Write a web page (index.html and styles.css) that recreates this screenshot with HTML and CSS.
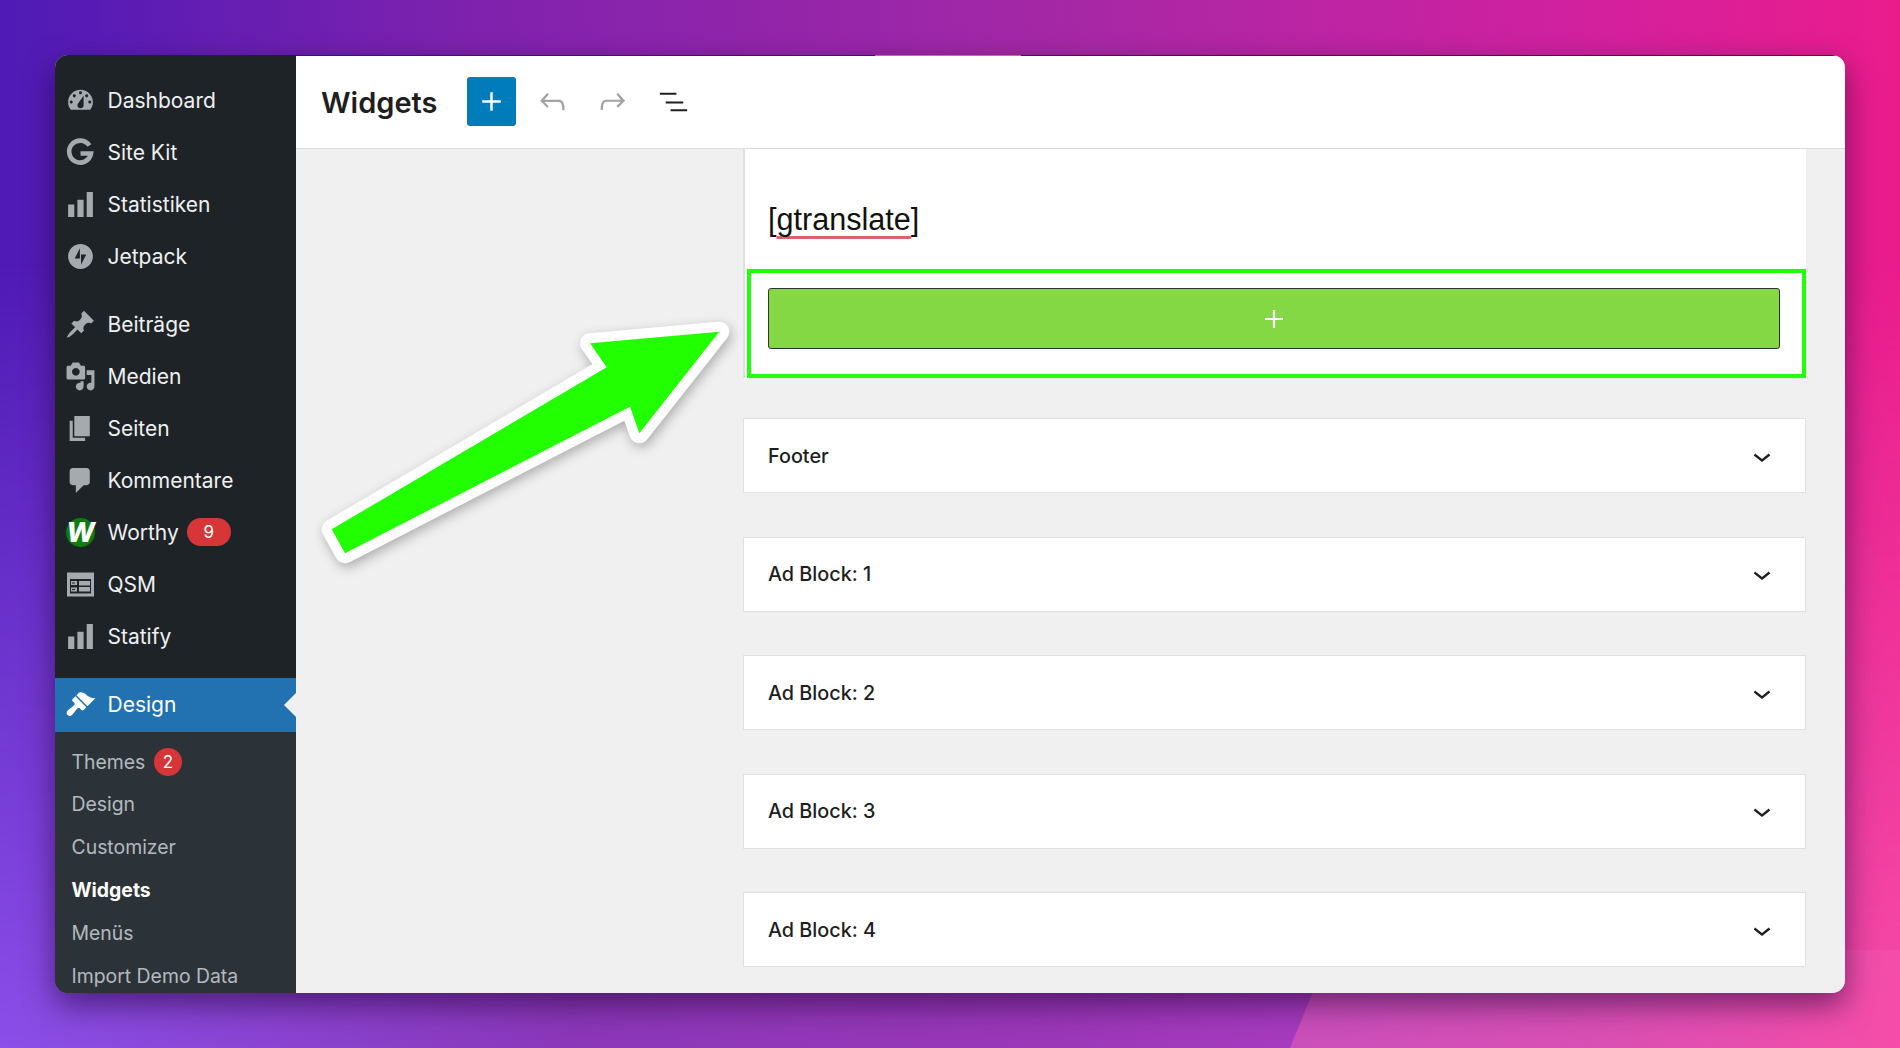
FILE: index.html
```html
<!DOCTYPE html>
<html lang="de">
<head>
<meta charset="utf-8">
<title>Widgets</title>
<link rel="stylesheet" href="styles.css">
</head>
<body>
<div class="wedge"></div>
<div class="window">
  <nav class="sidebar">
    <ul class="menu">
      <li class="item"><svg class="ico" viewBox="0 0 20 20"><path fill-rule="evenodd" d="M3.76 16h12.48c1.1-1.37 1.76-3.11 1.76-5 0-4.42-3.58-8-8-8s-8 3.58-8 8c0 1.89.66 3.63 1.76 5zM10 4c.55 0 1 .45 1 1s-.45 1-1 1-1-.45-1-1 .45-1 1-1zM6 6c.55 0 1 .45 1 1s-.45 1-1 1-1-.45-1-1 .45-1 1-1zm8 0c.55 0 1 .45 1 1s-.45 1-1 1-1-.45-1-1 .45-1 1-1zm-5.37 5.55L12 7v6c0 1.1-.9 2-2 2s-2-.9-2-2c0-.57.24-1.08.63-1.45zM4 10c.55 0 1 .45 1 1s-.45 1-1 1-1-.45-1-1 .45-1 1-1zm12 0c.55 0 1 .45 1 1s-.45 1-1 1-1-.45-1-1 .45-1 1-1z"/></svg>Dashboard</li>
      <li class="item"><svg class="ico" viewBox="0 0 31 31"><path class="gstroke" d="M24.400 8.600A11 11 0 1 0 26 16.500H15.500"/></svg>Site Kit</li>
      <li class="item"><svg class="ico" viewBox="0 0 20 20"><path d="M18 18V2h-4v16h4zm-6 0V7H8v11h4zm-6 0v-8H2v8h4z"/></svg>Statistiken</li>
      <li class="item"><svg class="ico" viewBox="-4 -4 40 40"><path fill-rule="evenodd" d="M16 0C7.200 0 0 7.200 0 16s7.200 16 16 16 16-7.200 16-16S24.800 0 16 0zM15.200 18.700H8.500L15.200 5.500v13.200zM16.700 26.500V13.300h6.700z"/></svg>Jetpack</li>
    </ul>
    <ul class="menu menu-next">
      <li class="item"><svg class="ico" viewBox="0 0 20 20"><path d="M10.440 3.020l1.820-1.820 6.360 6.350-1.830 1.820c-1.050-.68-2.480-.57-3.410.36l-.75.75c-.92.93-1.040 2.350-.35 3.410l-1.830 1.820-2.410-2.410-2.800 2.790c-.42.42-3.380 2.710-3.800 2.290s1.860-3.390 2.280-3.810l2.790-2.790L4.100 9.360l1.830-1.820c1.050.69 2.480.57 3.400-.36l.75-.75c.93-.92 1.050-2.350.36-3.410z"/></svg>Beiträge</li>
      <li class="item"><svg class="ico" viewBox="0 0 20 20"><path fill-rule="evenodd" d="M13 11V4c0-.55-.45-1-1-1h-1.670L9 1H5L3.670 3H2c-.55 0-1 .45-1 1v7c0 .55.45 1 1 1h10c.55 0 1-.45 1-1zM7 4.500c1.380 0 2.500 1.120 2.500 2.500S8.380 9.500 7 9.500 4.500 8.380 4.500 7 5.620 4.500 7 4.500zM14 6h5v10.500c0 1.380-1.120 2.500-2.500 2.500S14 17.880 14 16.500s1.120-2.500 2.500-2.500c.17 0 .34.020.5.050V9h-3V6zm-4 8.050V13h2v3.500c0 1.380-1.120 2.500-2.500 2.500S7 17.880 7 16.500 8.120 14 9.500 14c.17 0 .34.020.5.050z"/></svg>Medien</li>
      <li class="item"><svg class="ico" viewBox="0 0 20 20"><path d="M6 15V2h10v13H6zm-1 1h8v2H3V5h2v11z"/></svg>Seiten</li>
      <li class="item"><svg class="ico" viewBox="0 0 20 20"><path d="M5 2h9c1.100 0 2 .9 2 2v7c0 1.100-.9 2-2 2h-2l-5 5v-5H5c-1.100 0-2-.9-2-2V4c0-1.100.9-2 2-2z"/></svg>Kommentare</li>
      <li class="item"><span class="worthy-logo">W</span>Worthy<span class="badge badge-wide">9</span></li>
      <li class="item"><svg class="ico" viewBox="0 0 31 31"><path fill-rule="evenodd" d="M2 3.500h27v24H2zM5 10v14.500h21V10z"/><path d="M6 12h6v4H6zM6 18.500h6v4H6z M14 12h11v4.500H14zM14 18h11v4.500H14z"/><path class="qsm-cut" d="M7 14h3M7 20.500h3"/></svg>QSM</li>
      <li class="item"><svg class="ico" viewBox="0 0 20 20"><path d="M18 18V2h-4v16h4zm-6 0V7H8v11h4zm-6 0v-8H2v8h4z"/></svg>Statify</li>
    </ul>
    <div class="current"><svg class="ico ico-white" viewBox="0 0 20 20"><path d="M14.480 11.060L7.410 3.990l1.500-1.500c.5-.56 2.300-.47 3.510.32 1.210.8 1.430 1.280 2.910 2.100 1.180.64 2.450 1.260 4.450.85zm-.71.71L6.700 4.700 4.930 6.470c-.39.39-.39 1.020 0 1.410l1.060 1.060c.39.39.39 1.030 0 1.420-.6.6-1.430 1.270-2.210 1.840-.78.58-1.430 1.130-2.150 1.820-.78.78-.78 2.050 0 2.830.78.78 2.050.78 2.830 0 .69-.72 1.240-1.370 1.820-2.150.57-.78 1.240-1.610 1.840-2.210.39-.39 1.030-.39 1.420 0l1.060 1.060c.39.39 1.020.39 1.410 0z"/></svg>Design</div>
    <ul class="submenu">
      <li class="subitem">Themes<span class="badge">2</span></li>
      <li class="subitem">Design</li>
      <li class="subitem">Customizer</li>
      <li class="subitem subitem-active">Widgets</li>
      <li class="subitem">Menüs</li>
      <li class="subitem">Import Demo Data</li>
    </ul>
  </nav>
  <main class="main">
    <header class="topbar">
      <span class="topstrip"></span>
      <h1 class="title">Widgets</h1>
      <button class="btn btn-add"><svg viewBox="0 0 24 24"><path d="M18 11.200h-5.200V6h-1.600v5.200H6v1.600h5.200V18h1.600v-5.200H18z"/></svg></button>
      <button class="btn btn-muted"><svg viewBox="0 0 24 24"><path d="M18.300 11.700c-.6-.6-1.400-.9-2.300-.9H6.700l2.900-3.300-1.100-1-4.500 5L8.500 16l1-1-2.700-2.700H16c.5 0 .9.200 1.300.5 1 1 1 3.400 1 4.500v.3h1.500v-.2c0-1.500 0-4.300-1.500-5.700z"/></svg></button>
      <button class="btn btn-muted"><svg viewBox="0 0 24 24"><path d="M15.600 6.500l-1.100 1 2.900 3.300H8c-.9 0-1.700.3-2.300.9-1.400 1.500-1.400 4.200-1.400 5.600v.2h1.500v-.3c0-1.100 0-3.500 1-4.500.3-.3.7-.5 1.300-.5h9.200L14.500 15l1.100 1.100 4.600-4.600-4.600-5z"/></svg></button>
      <button class="btn btn-dark"><svg viewBox="0 0 38 38"><path d="M5 10h17v2H5zM11 19h18v2H11zM16 27h17v2H16z"/></svg></button>
    </header>
    <div class="content">
      <section class="area">
        <p class="shortcode">[<span class="misspelt">gtranslate</span>]</p>
        <div class="highlight">
          <div class="appender"><svg viewBox="0 0 24 24"><path d="M21 10.900h-7.900V3h-2.200v7.900H3v2.200h7.900V21h2.200v-7.900H21z"/></svg></div>
        </div>
      </section>
      <div class="card"><span>Footer</span><svg viewBox="0 0 24 24"><path d="M17.500 11.600L12 16l-5.500-4.400.9-1.200L12 14l4.500-3.600 1 1.200z"/></svg></div>
      <div class="card"><span>Ad Block: 1</span><svg viewBox="0 0 24 24"><path d="M17.500 11.600L12 16l-5.500-4.400.9-1.200L12 14l4.500-3.600 1 1.200z"/></svg></div>
      <div class="card"><span>Ad Block: 2</span><svg viewBox="0 0 24 24"><path d="M17.500 11.600L12 16l-5.500-4.400.9-1.200L12 14l4.500-3.600 1 1.200z"/></svg></div>
      <div class="card"><span>Ad Block: 3</span><svg viewBox="0 0 24 24"><path d="M17.500 11.600L12 16l-5.500-4.400.9-1.200L12 14l4.500-3.600 1 1.200z"/></svg></div>
      <div class="card"><span>Ad Block: 4</span><svg viewBox="0 0 24 24"><path d="M17.500 11.600L12 16l-5.500-4.400.9-1.200L12 14l4.500-3.600 1 1.200z"/></svg></div>
    </div>
  </main>
</div>
<svg class="arrow" viewBox="300 300 450 280"><polygon points="331.700,529.300 345,553.300 630,406.700 639.300,433.300 719.300,331.700 590,343.300 606.700,367.300"/></svg>
</body>
</html>
```
FILE: styles.css
```css
* { box-sizing: border-box; }
html, body { margin: 0; height: 100%; }
body {
  position: relative;
  width: 1900px;
  height: 1048px;
  overflow: hidden;
  padding: 55px 55px 55px 55px;
  font-family: Inter, "Noto Sans", sans-serif;
  background: linear-gradient(90deg, #4e1ab6 0%, #7f22ae 25%, #a428a6 55%, #d021a0 82%, #ea1c8c 100%);
}
body::before {
  content: "";
  position: absolute;
  inset: 0;
  background: linear-gradient(90deg, #8b4fe8 0%, #8a38b8 30%, #9a38b8 55%, #a83cc0 70%, #d04aa8 85%, #f64ca8 100%);
  -webkit-mask-image: linear-gradient(180deg, transparent 0%, transparent 25%, #000 100%);
  mask-image: linear-gradient(180deg, transparent 0%, transparent 25%, #000 100%);
}
.wedge {
  position: absolute;
  inset: 0;
  background: linear-gradient(100deg, #c84fbc 68%, #d84fb4 85%, #f64ca8 100%);
  clip-path: polygon(1330px 950px, 1900px 950px, 1900px 1048px, 1290px 1048px);
}
.window {
  position: relative;
  display: flex;
  width: 1790px;
  height: 938px;
  border-radius: 13px;
  overflow: hidden;
  background: #f0f0f0;
}
body::after {
  content: "";
  position: absolute;
  left: 55px;
  top: 55px;
  width: 1790px;
  height: 938px;
  border-radius: 13px;
  box-shadow: 0 12px 30px rgba(30, 0, 50, .55);
  z-index: 0;
  pointer-events: none;
}
.sidebar {
  flex: 0 0 241px;
  background: #1d2327;
  padding-top: 20px;
  color: #f0f0f1;
  font-size: 21px;
}
.menu, .submenu { list-style: none; margin: 0; padding: 0; }
.menu-next { margin-top: 16.4px; }
.item, .current {
  display: flex;
  align-items: center;
  height: 51.9px;
  padding-left: 10px;
  gap: 11.5px;
}
.ico { flex: 0 0 31px; width: 31px; height: 31px; fill: #a7aaad; }
.ico-white { fill: #fff; }
.gstroke { fill: none; stroke: #a7aaad; stroke-width: 4.6; }
.qsm-cut { fill: none; stroke: #1d2327; stroke-width: 1; }
.worthy-logo {
  flex: 0 0 29px;
  width: 29px;
  height: 29px;
  margin: 0 1px;
  border-radius: 50%;
  background: #0b7d10;
  color: #fff;
  font-weight: 800;
  font-style: italic;
  font-size: 27px;
  line-height: 29px;
  white-space: nowrap;
  display: flex;
  justify-content: center;
}
.badge {
  display: inline-block;
  min-width: 28px;
  height: 28px;
  padding: 0 8px;
  margin-left: 8.5px;
  border-radius: 14px;
  background: #d63638;
  color: #fff;
  font-size: 17px;
  line-height: 28px;
  text-align: center;
}
.badge-wide { width: 44px; margin-left: -3.5px; }
.current {
  position: relative;
  height: 53.5px;
  margin-top: 16px;
  background: #2271b1;
  color: #fff;
}
.current::after {
  content: "";
  position: absolute;
  right: 0;
  top: 15px;
  border: 12px solid transparent;
  border-left: 0;
  border-right-color: #f0f0f1;
}
.submenu {
  background: #2c3338;
  padding-top: 8.5px;
  height: 270px;
  color: rgba(240, 246, 252, .7);
  font-size: 19.4px;
}
.subitem {
  display: flex;
  align-items: center;
  height: 42.8px;
  padding-left: 16.5px;
}
.subitem-active { color: #fff; font-weight: 700; }
.main { flex: 1; display: flex; flex-direction: column; min-width: 0; }
.topbar {
  position: relative;
  flex: 0 0 94px;
  display: flex;
  align-items: center;
  gap: 11.5px;
  padding: 0 0 1px 25px;
  background: #fff;
  border-top: 1px solid #33203f;
  border-bottom: 1px solid #dcdcdc;
}
.topstrip {
  position: absolute;
  left: 579px;
  top: -1px;
  width: 146px;
  height: 1px;
  background: #d8705a;
}
.title {
  margin: 1px 18.5px 0 0;
  width: 116px;
  font-size: 29px;
  font-weight: 600;
  color: #1e1e1e;
  white-space: nowrap;
}
.btn {
  width: 49px;
  height: 49px;
  padding: 0;
  border: 0;
  border-radius: 3px;
  background: transparent;
  display: flex;
  align-items: center;
  justify-content: center;
}
.btn svg { width: 37px; height: 37px; }
.btn-add { background: #007cba; fill: #fff; }
.btn-muted { fill: #a3a3a3; }
.btn-dark { fill: #1e1e1e; }
.content {
  flex: 1;
  display: flex;
  flex-direction: column;
  gap: 40px;
  padding: 0 39px 0 447px;
  overflow: hidden;
  background: #f0f0f0;
}
.area {
  background: #fff;
  border-left: 2px solid #e0e0e0;
}
.shortcode {
  margin: 0;
  height: 120px;
  padding: 47px 0 0 23px;
  font-family: "Liberation Sans", Arial, sans-serif;
  font-size: 30.6px;
  line-height: 46px;
  color: #111;
}
.misspelt {
  text-decoration: underline solid #e0606c 2.5px;
  text-underline-offset: 6px;
  text-decoration-skip-ink: none;
}
.highlight {
  margin-left: 2px;
  border: 4px solid #22ff0a;
  padding: 15px 22px 25px 17px;
}
.appender {
  display: flex;
  align-items: center;
  justify-content: center;
  height: 61px;
  border: 1.6px solid #2f332f;
  border-radius: 3px;
  background: #83d844;
}
.appender svg { width: 24px; height: 24px; fill: #fff; }
.card {
  flex: 0 0 75px;
  display: flex;
  align-items: center;
  justify-content: space-between;
  padding: 0 25px 0 24px;
  background: #fff;
  border: 1px solid #e0e0e0;
  font-size: 19.8px;
  font-weight: 500;
  color: #1e1e1e;
}
.card + .card { margin-top: 3.5px; }
.card svg { width: 36px; height: 36px; fill: #1e1e1e; }
.arrow {
  position: absolute;
  left: 300px;
  top: 300px;
  width: 450px;
  height: 280px;
  overflow: visible;
  filter: drop-shadow(2px 4px 6px rgba(0, 0, 0, .28));
}
.arrow polygon {
  fill: #22ff00;
  stroke: #fff;
  stroke-width: 20;
  stroke-linejoin: round;
  paint-order: stroke;
}
```
